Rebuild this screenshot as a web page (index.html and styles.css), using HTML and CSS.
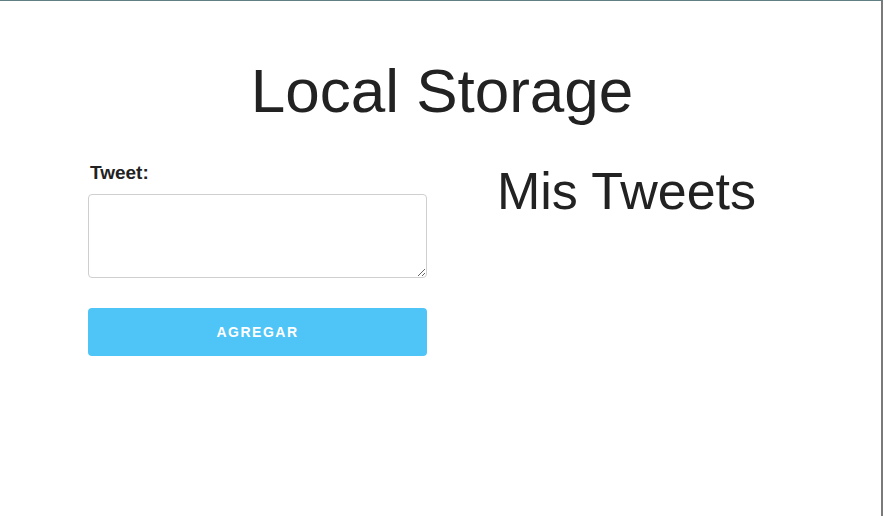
FILE: index.html
```html
<!DOCTYPE html>
<html lang="es">
<head>
<meta charset="utf-8">
<title>Local Storage</title>
<link rel="stylesheet" href="styles.css">
</head>
<body>
<div class="frame">
  <h1 class="title">Local Storage</h1>
  <div class="container">
    <form class="form">
      <label class="label" for="tweet">Tweet:</label>
      <textarea class="textarea" id="tweet"></textarea>
      <button type="button" class="button">AGREGAR</button>
    </form>
    <div class="list">
      <h2 class="subtitle">Mis Tweets</h2>
    </div>
  </div>
</div>
</body>
</html>
```

FILE: styles.css
```css
* { box-sizing: border-box; }
html, body {
  margin: 0;
  padding: 0;
  height: 100%;
  background: #fff;
}
body {
  font-family: "Liberation Sans", Arial, sans-serif;
  color: #222;
}
.frame {
  height: 100%;
  padding-left: 3px;
  border-top: 1px solid #5f7f84;
  border-right: 2px solid #7a7a7a;
  margin-right: 1px;
}
.title {
  margin: 0;
  padding-top: 54px;
  font-size: 62px;
  font-weight: 400;
  line-height: 1.15;
  text-align: center;
}
.container {
  width: 708px;
  margin: 0 auto;
  display: grid;
  grid-template-columns: 1fr 1fr;
  column-gap: 30px;
  padding-top: 36px;
}
.form {
  display: flex;
  flex-direction: column;
}
.label {
  font-size: 19px;
  font-weight: 700;
  line-height: 22px;
  padding-left: 2px;
}
.textarea {
  margin-top: 10px;
  height: 84px;
  width: 100%;
  border: 1px solid #cfcfcf;
  border-radius: 4px;
  font-family: inherit;
}
.button {
  margin-top: 30px;
  height: 48px;
  width: 100%;
  border: none;
  border-radius: 4px;
  background: #4fc4f6;
  color: #fff;
  font-family: inherit;
  font-size: 14px;
  font-weight: 700;
  letter-spacing: 1.5px;
}
.list {
  text-align: center;
}
.subtitle {
  margin: 0;
  font-size: 52px;
  font-weight: 400;
  line-height: 1.15;
}
```
